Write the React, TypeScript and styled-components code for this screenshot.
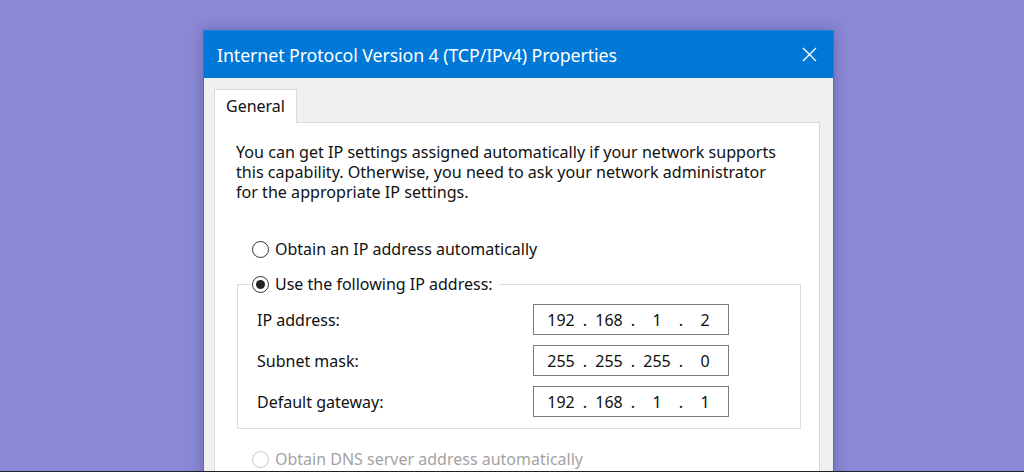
import React from 'react';
import styled, { createGlobalStyle } from 'styled-components';

const GlobalStyle = createGlobalStyle`
  html, body {
    margin: 0;
    padding: 0;
    background: #8b89d6;
  }
  * {
    box-sizing: border-box;
  }
`;

const Page = styled.div`
  width: 1024px;
  height: 472px;
  overflow: hidden;
  background: #8b89d6;
  padding: 30px 0 0 203px;
  border-bottom: 1px solid #1f1f2a;
  font-family: 'Noto Sans', 'Liberation Sans', sans-serif;
`;

const Window = styled.div`
  width: 631px;
  border: 1px solid #1a82d8;
  border-bottom: none;
  background: #f0f0f0;
  box-shadow: 0 0 12px rgba(40, 40, 90, 0.35);
`;

const TitleBar = styled.div`
  height: 47px;
  background: #0078d7;
  display: flex;
  align-items: center;
  justify-content: space-between;
  padding: 0 16px 0 13px;
  color: #ffffff;
`;

const Title = styled.div`
  font-size: 17.8px;
  letter-spacing: -0.1px;
`;

const CloseButton = styled.div`
  width: 16px;
  height: 16px;
  display: flex;
  align-items: center;
  justify-content: center;
`;

const Body = styled.div`
  padding: 11px 13px 0 10px;
`;

const Tabs = styled.div`
  display: flex;
  position: relative;
  z-index: 1;
  margin-bottom: -1px;
`;

const Tab = styled.div`
  width: 83px;
  height: 34px;
  background: #ffffff;
  border: 1px solid #d9d9d9;
  border-bottom: none;
  padding: 5px 0 0 11px;
  font-size: 16px;
  color: #111111;
`;

const Panel = styled.div`
  background: #ffffff;
  border: 1px solid #d9d9d9;
  border-bottom: none;
  height: 360px;
  padding: 19px 20px 0 21px;
`;

const Intro = styled.p`
  margin: 0;
  font-size: 16.1px;
  line-height: 20px;
  color: #111111;
  white-space: nowrap;
`;

const RadioRow = styled.label<{ $disabled?: boolean }>`
  display: flex;
  align-items: center;
  gap: 6px;
  font-size: 16px;
  line-height: 20px;
  color: ${({ $disabled }) => ($disabled ? '#a3a3a3' : '#111111')};
  background: #ffffff;
`;

const Circle = styled.span<{ $checked?: boolean; $disabled?: boolean }>`
  width: 17px;
  height: 17px;
  border-radius: 50%;
  border: 1px solid ${({ $disabled }) => ($disabled ? '#c6c6c6' : '#333333')};
  display: flex;
  align-items: center;
  justify-content: center;
  &::after {
    content: '';
    display: ${({ $checked }) => ($checked ? 'block' : 'none')};
    width: 9px;
    height: 9px;
    border-radius: 50%;
    background: #222222;
  }
`;

const AutoRow = styled.div`
  margin: 37px 0 0 16px;
`;

const Group = styled.fieldset`
  margin: 15px 0 0 1px;
  width: 564px;
  border: 1px solid #dcdcdc;
  padding: 10px 19px 11px 19px;
  min-width: 0;
`;

const Legend = styled.legend`
  padding: 0 6px 0 0;
  margin-left: -5px;
`;

const Fields = styled.div`
  display: flex;
  flex-direction: column;
  gap: 10px;
`;

const FieldRow = styled.div`
  display: flex;
  align-items: center;
`;

const FieldLabel = styled.span`
  width: 276px;
  font-size: 16px;
  color: #111111;
`;

const IpBox = styled.div`
  width: 196px;
  height: 31px;
  border: 1px solid #7a7a7a;
  display: flex;
  align-items: center;
  padding-left: 7px;
  font-size: 16px;
  color: #111111;
`;

const Octet = styled.span`
  width: 40px;
  text-align: center;
`;

const Dot = styled.span`
  width: 8px;
  text-align: center;
`;

const DnsRow = styled.div`
  margin: 20px 0 0 16px;
`;

const fields = [
  { label: 'IP address:', value: ['192', '168', '1', '2'] },
  { label: 'Subnet mask:', value: ['255', '255', '255', '0'] },
  { label: 'Default gateway:', value: ['192', '168', '1', '1'] },
];

const IpInput = ({ octets }: { octets: string[] }) => (
  <IpBox>
    {octets.map((o, i) => (
      <React.Fragment key={i}>
        {i > 0 && <Dot>.</Dot>}
        <Octet>{o}</Octet>
      </React.Fragment>
    ))}
  </IpBox>
);

const App = () => {
  return (
    <>
      <GlobalStyle />
      <Page>
        <Window>
          <TitleBar>
            <Title>Internet Protocol Version 4 (TCP/IPv4) Properties</Title>
            <CloseButton>
              <svg width="15" height="15" viewBox="0 0 15 15">
                <path d="M1 1 L14 14 M14 1 L1 14" stroke="#ffffff" strokeWidth="1.4" fill="none" />
              </svg>
            </CloseButton>
          </TitleBar>
          <Body>
            <Tabs>
              <Tab>General</Tab>
            </Tabs>
            <Panel>
              <Intro>
                You can get IP settings assigned automatically if your network supports
                <br />
                this capability. Otherwise, you need to ask your network administrator
                <br />
                for the appropriate IP settings.
              </Intro>
              <AutoRow>
                <RadioRow>
                  <Circle />
                  Obtain an IP address automatically
                </RadioRow>
              </AutoRow>
              <Group>
                <Legend>
                  <RadioRow>
                    <Circle $checked />
                    Use the following IP address:
                  </RadioRow>
                </Legend>
                <Fields>
                  {fields.map((f) => (
                    <FieldRow key={f.label}>
                      <FieldLabel>{f.label}</FieldLabel>
                      <IpInput octets={f.value} />
                    </FieldRow>
                  ))}
                </Fields>
              </Group>
              <DnsRow>
                <RadioRow $disabled>
                  <Circle $disabled />
                  Obtain DNS server address automatically
                </RadioRow>
              </DnsRow>
            </Panel>
          </Body>
        </Window>
      </Page>
    </>
  );
};

export default App;
